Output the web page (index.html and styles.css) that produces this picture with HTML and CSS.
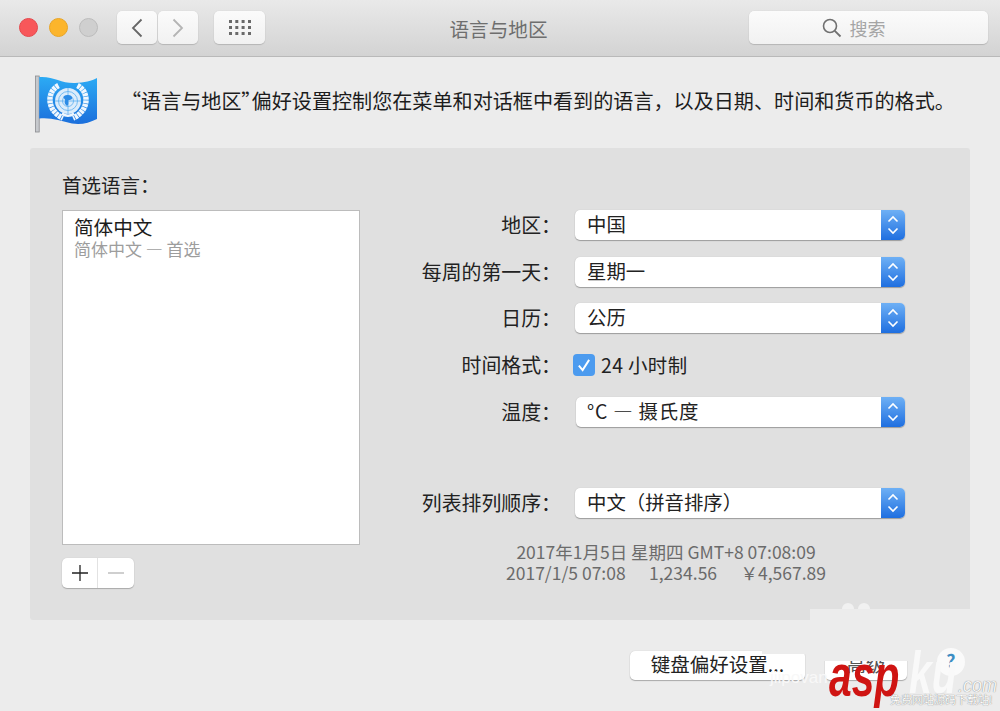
FILE: index.html
```html
<!DOCTYPE html>
<html lang="zh-CN">
<head>
<meta charset="utf-8">
<title>语言与地区</title>
<link rel="stylesheet" href="styles.css">
</head>
<body>
<div class="window">
  <header class="titlebar">
    <div class="lights">
      <span class="light red"></span>
      <span class="light yellow"></span>
      <span class="light gray"></span>
    </div>
    <div class="nav">
      <button class="tbtn nav-btn"><svg width="14" height="22" viewBox="0 0 14 22"><path d="M11.500 2.500 3 11l8.500 8.500" fill="none" stroke="#666" stroke-width="1.800"/></svg></button>
      <button class="tbtn nav-btn"><svg width="14" height="22" viewBox="0 0 14 22"><path d="M2.500 2.500 11 11l-8.500 8.500" fill="none" stroke="#b4b4b4" stroke-width="1.800"/></svg></button>
    </div>
    <button class="tbtn grid-btn"><svg width="22" height="16" viewBox="0 0 22 16"><g fill="#6a6a6a"><rect x="0" y="0" width="3" height="3"/><rect x="6.300" y="0" width="3" height="3"/><rect x="12.600" y="0" width="3" height="3"/><rect x="19" y="0" width="3" height="3"/><rect x="0" y="6" width="3" height="3"/><rect x="6.300" y="6" width="3" height="3"/><rect x="12.600" y="6" width="3" height="3"/><rect x="19" y="6" width="3" height="3"/><rect x="0" y="12" width="3" height="3"/><rect x="6.300" y="12" width="3" height="3"/><rect x="12.600" y="12" width="3" height="3"/><rect x="19" y="12" width="3" height="3"/></g></svg></button>
    <h1 class="title">语言与地区</h1>
    <div class="tbtn search">
      <svg width="20" height="20" viewBox="0 0 20 20"><circle cx="8" cy="8" r="6.500" fill="none" stroke="#707070" stroke-width="1.600"/><path d="m12.800 12.800 5.700 5.700" stroke="#707070" stroke-width="1.800"/></svg>
      <span>搜索</span>
    </div>
  </header>

  <main class="content">
    <section class="intro">
      <svg class="flag" width="64" height="58" viewBox="0 0 64 58">
        <defs><linearGradient id="flagfill" x1="0" y1="0" x2="0" y2="1"><stop offset="0" stop-color="#2cabf4"/><stop offset="1" stop-color="#1b6fdc"/></linearGradient></defs>
        <rect x="1.400" y="1" width="3.800" height="56" fill="#c6c9cd" stroke="#8b8d90" stroke-width=".8"/>
        <path d="M5.200 2C20 1 27 8.500 41 8 50 7.500 58 6 63 3V44C55 48 47 50 38 48.500 27 46 16 42 5.200 43.500Z" fill="url(#flagfill)"/>
        <path d="M24.500 10.500C12 17 13 36 29 43M43.500 10.500C56 17 55 36 39 43" fill="none" stroke="#f0f7fe" stroke-width="5.500" stroke-dasharray="3 .6"/>
        <circle cx="34" cy="26" r="13" fill="#dcecfb"/>
        <g fill="none" stroke="#5aaef0" stroke-width=".8">
          <circle cx="34" cy="26" r="9.500"/>
          <circle cx="34" cy="26" r="5.500"/>
          <path d="M34 13v26M21 26h26"/>
        </g>
        <path d="M30 21c3-2 7-1 8 1s-1 3-3 3 1 4-2 6c-2-2-3-3-2-5s-3-3-1-5Z" fill="#2c8be6"/>
        <path d="M28 38.500c4 3 8 3 12 0" fill="none" stroke="#f0f7fe" stroke-width="2.400"/>
      </svg>
      <p class="intro-text">“语言与地区<span class="quote-close">”</span>偏好设置控制您在菜单和对话框中看到的语言，以及日期、时间和货币的格式。</p>
    </section>

    <section class="panel">
      <div class="lang-col">
        <div class="lang-head">首选语言：</div>
        <div class="lang-list">
          <div class="lang-name">简体中文</div>
          <div class="lang-sub">简体中文 — 首选</div>
        </div>
        <div class="stepper">
          <span class="step plus"><svg width="18" height="18" viewBox="0 0 18 18"><path d="M1 9h16M9 1v16" stroke="#222" stroke-width="1.300"/></svg></span>
          <span class="step minus"><svg width="18" height="18" viewBox="0 0 18 18"><path d="M1 9h16" stroke="#b5b5b5" stroke-width="1.300"/></svg></span>
        </div>
      </div>

      <div class="form-col">
        <div class="row"><label class="lbl">地区：</label><div class="select"><span class="val">中国</span><span class="cap"></span></div></div>
        <div class="row"><label class="lbl">每周的第一天：</label><div class="select"><span class="val">星期一</span><span class="cap"></span></div></div>
        <div class="row"><label class="lbl">日历：</label><div class="select"><span class="val">公历</span><span class="cap"></span></div></div>
        <div class="row row-check"><label class="lbl">时间格式：</label>
          <span class="check"><svg width="16" height="16" viewBox="0 0 14 14"><path d="M2.500 7.500 5.800 11.500 11.500 2.500" fill="none" stroke="#fff" stroke-width="1.700"/></svg></span>
          <span class="check-text">24 小时制</span>
        </div>
        <div class="row row-temp"><label class="lbl">温度：</label><div class="select narrow"><span class="val">°C — 摄氏度</span><span class="cap"></span></div></div>
        <div class="row row-order"><label class="lbl">列表排列顺序：</label><div class="select"><span class="val">中文（拼音排序）</span><span class="cap"></span></div></div>
        <div class="formats">
          <div class="fmt-1">2017年1月5日 星期四 GMT+8 07:08:09</div>
          <div class="fmt-2"><span>2017/1/5 07:08</span><span>1,234.56</span><span>￥4,567.89</span></div>
        </div>
      </div>
    </section>

    <footer class="actions">
      <button class="btn kb">键盘偏好设置...</button>
      <button class="btn adv">高级</button>
      <span class="help">?</span>
    </footer>
  </main>

  <div class="dots"><i></i><i></i></div>
  <div class="patch"></div>
  <div class="watermark">
    <span class="wm-faint">jiipovan</span>
    <span class="wm-asp">asp</span><span class="wm-ku">ku</span><span class="wm-com">.com</span>
    <span class="wm-sub">免费网站源码下载站!</span>
  </div>
</div>
</body>
</html>
```

FILE: styles.css
```css
* { box-sizing: border-box; }
html, body { margin: 0; padding: 0; }
body {
  width: 1000px;
  height: 711px;
  overflow: hidden;
  background: #ececec;
  font-family: "Noto Sans CJK SC", "Liberation Sans", sans-serif;
  color: #222;
}
.window { position: relative; width: 1000px; height: 711px; overflow: hidden; }

.titlebar {
  height: 57px;
  display: flex;
  align-items: center;
  padding: 0 12px 1px 19px;
  background: linear-gradient(#e9e9e9, #d3d3d3);
  border-bottom: 1px solid #b9b9b9;
}
.lights { display: flex; gap: 11px; }
.light { width: 19px; height: 19px; border-radius: 50%; }
.red { background: #f8575a; border: 1px solid #e5484c; }
.yellow { background: #fcb52c; border: 1px solid #e9a526; }
.gray { background: #cfcfcf; border: 1px solid #bcbcbc; }

.tbtn {
  height: 33px;
  padding: 0;
  border: 0;
  border-radius: 5px;
  background: linear-gradient(#fbfbfb, #f1f1f1);
  box-shadow: 0 1px 1px #b5b5b5, 0 0 1px #c4c4c4;
  display: flex;
  align-items: center;
  justify-content: center;
}
.nav { display: flex; gap: 1px; margin-left: 19px; }
.nav-btn { width: 40px; }
.grid-btn { width: 51px; margin-left: 16px; }
.title {
  flex: 1;
  margin: 0;
  padding: 3px 17px 0 0;
  text-align: center;
  font-size: 19.600px;
  line-height: 28px;
  font-weight: 400;
  color: #6e6e6e;
}
.search {
  width: 239px;
  gap: 8px;
  padding-right: 30px;
  font-size: 18px;
  color: #a5a5a5;
}

.content { display: flex; flex-direction: column; }
.intro { display: flex; align-items: center; height: 91px; padding: 0 0 0 34px; }
.flag { flex: none; margin-top: 3px; }
.intro-text {
  margin: 0 0 4px 23px;
  font-size: 20.100px;
  line-height: 28px;
  white-space: nowrap;
  color: #1c1c1c;
}
.quote-close { font-feature-settings: "palt"; }

.panel {
  width: 940px;
  height: 472px;
  margin-left: 30px;
  background: #e0e0e0;
  border-radius: 3px;
  display: flex;
  padding: 25px 0 0 32px;
}
.lang-col { width: 298px; flex: none; }
.lang-head { font-size: 19.500px; line-height: 26px; height: 37px; margin-top: -1px; margin-bottom: 1px; color: #222; }
.lang-list {
  height: 335px;
  background: #fff;
  border: 1px solid #bcbcbc;
  padding: 3px 11px;
}
.lang-name { font-size: 19.600px; line-height: 26px; color: #1c1c1c; }
.lang-sub { font-size: 17px; line-height: 18px; color: #9d9d9d; }
.stepper {
  display: flex;
  width: 72px;
  height: 30px;
  margin-top: 13px;
  background: #fff;
  border-radius: 5px;
  box-shadow: 0 1px 1px #a9a9a9, 0 0 1px #bbb;
}
.step { display: flex; align-items: center; justify-content: center; }
.plus { width: 36px; border-right: 1px solid #e2e2e2; }
.minus { width: 36px; }

.form-col { flex: none; width: 545px; padding-top: 37px; }
.row { display: flex; align-items: center; height: 30px; margin-bottom: 16.500px; }
.lbl {
  width: 201px;
  flex: none;
  margin-right: 14px;
  text-align: right;
  font-size: 19.900px;
  line-height: 28px;
  white-space: nowrap;
  color: #222;
}
.select {
  position: relative;
  width: 330px;
  height: 30px;
  padding: 0 0 2px 12px;
  background: #fff;
  border-radius: 5px;
  box-shadow: 0 1px 1px #9c9c9c, 0 0 1px #b5b5b5;
  display: flex;
  align-items: center;
}
.select.narrow { width: 329px; margin-left: 1px; padding-left: 11px; }
.narrow .val { letter-spacing: .8px; }
.val { font-size: 19.400px; line-height: 28px; color: #222; }
.cap {
  position: absolute;
  top: 0;
  right: 0;
  bottom: 0;
  width: 24px;
  border-radius: 0 5px 5px 0;
  background-color: #3f87ea;
  background-image:
    url("data:image/svg+xml,%3Csvg xmlns='http://www.w3.org/2000/svg' width='24' height='30'%3E%3Cpath d='M7.500 11.500 12 7l4.500 4.500M7.500 18.500 12 23l4.500-4.500' fill='none' stroke='%23fff' stroke-width='1.600'/%3E%3C/svg%3E"),
    linear-gradient(#6eb0f5, #1f6fe0);
}
.row-check { margin-bottom: 17.500px; }
.check {
  width: 22px;
  height: 22px;
  margin-left: -2px;
  border-radius: 4px;
  background: #4c9bef;
  display: flex;
  align-items: center;
  justify-content: center;
}
.check-text { margin-left: 6px; font-size: 19.400px; line-height: 28px; letter-spacing: .4px; color: #222; }
.row-temp { margin-bottom: 61px; }
.row-order { margin-bottom: 23px; }
.formats { width: 320px; margin-left: 146px; font-size: 17.500px; line-height: 21px; color: #6b6b6b; }
.fmt-1 { text-align: center; white-space: nowrap; }
.fmt-2 { display: flex; justify-content: space-between; white-space: nowrap; }

.actions {
  position: relative;
  display: flex;
  align-items: center;
  height: 30px;
  margin-top: 30px;
  padding-left: 630px;
}
.btn {
  height: 29px;
  padding: 0 0 2px;
  border: 0;
  border-radius: 5px;
  background: #fff;
  font: inherit;
  font-size: 19.500px;
  line-height: 26px;
  color: #222;
  box-shadow: 0 1px 1px #a9a9a9, 0 0 1px #bbb;
}
.kb { width: 175px; }
.adv { width: 82px; margin-left: 20px; color: #555; }
.help {
  width: 28px;
  height: 28px;
  margin: -6px 0 0 30px;
  border-radius: 50%;
  background: #fafafa;
  text-align: center;
  font-size: 18px;
  line-height: 24px;
  font-weight: 700;
  color: #3d8ec4;
}

.patch {
  position: absolute;
  left: 762px;
  top: 609px;
  width: 208px;
  height: 52px;
  background: #ececec;
  clip-path: polygon(48px 0, 208px 0, 208px 38px, 173px 38px, 173px 52px, 48px 52px, 48px 45px, 0 45px, 0 36px, 48px 36px);
}
.dots { position: absolute; left: 842px; top: 603px; display: flex; gap: 4px; }
.dots i { width: 12px; height: 12px; border-radius: 50%; background: #f1f1f1; }

.watermark { position: absolute; left: 0; top: 0; width: 1000px; height: 711px; font-family: "Liberation Sans", sans-serif; pointer-events: none; }
.watermark span { position: absolute; white-space: nowrap; transform-origin: left center; }
.wm-faint { left: 770px; top: 668px; font-size: 17px; line-height: 20px; color: #f8f8f8; }
.wm-asp { left: 829px; top: 641px; font-size: 60px; line-height: 70px; font-weight: 700; font-style: italic; color: #cf1412; transform: scaleX(.68); }
.wm-ku { left: 909px; top: 638px; font-size: 60px; line-height: 70px; font-weight: 700; font-style: italic; color: #f9f9f9; transform: scaleX(.68); }
.wm-com { left: 958px; top: 675px; font-size: 20px; line-height: 20px; font-style: italic; color: #f4f4f4; text-shadow: 0 0 1px #666; transform: scaleX(.9); }
.wm-sub { left: 890px; top: 692px; font-family: "Noto Sans CJK SC", sans-serif; font-size: 11px; line-height: 15px; color: #fff; text-shadow: 0 0 1px #555; }
```
